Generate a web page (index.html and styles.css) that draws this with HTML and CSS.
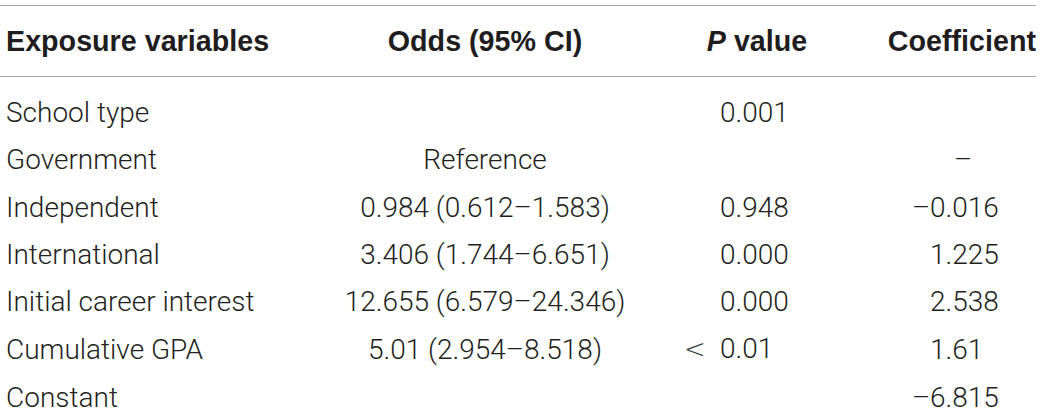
FILE: index.html
```html
<!DOCTYPE html>
<html lang="en">
<head>
<meta charset="utf-8">
<title>Exposure variables</title>
<link rel="stylesheet" href="styles.css">
</head>
<body>
<table class="results">
  <colgroup>
    <col class="c-var">
    <col class="c-odds">
    <col class="c-p">
    <col class="c-coef">
  </colgroup>
  <thead>
    <tr>
      <th class="h-var">Exposure variables</th>
      <th class="h-odds">Odds (95% CI)</th>
      <th class="h-p"><i>P</i> value</th>
      <th class="h-coef">Coefficient</th>
    </tr>
  </thead>
  <tbody>
    <tr class="first">
      <td class="var">School type</td>
      <td class="odds"></td>
      <td class="p">0.001</td>
      <td class="coef"></td>
    </tr>
    <tr>
      <td class="var">Government</td>
      <td class="odds">Reference</td>
      <td class="p"></td>
      <td class="coef"><span class="dash">–</span></td>
    </tr>
    <tr>
      <td class="var">Independent</td>
      <td class="odds">0.984 (0.612–1.583)</td>
      <td class="p">0.948</td>
      <td class="coef"><span class="minus">–</span>0.016</td>
    </tr>
    <tr>
      <td class="var">International</td>
      <td class="odds">3.406 (1.744–6.651)</td>
      <td class="p">0.000</td>
      <td class="coef">1.225</td>
    </tr>
    <tr>
      <td class="var">Initial career interest</td>
      <td class="odds">12.655 (6.579–24.346)</td>
      <td class="p">0.000</td>
      <td class="coef">2.538</td>
    </tr>
    <tr>
      <td class="var">Cumulative GPA</td>
      <td class="odds">5.01 (2.954–8.518)</td>
      <td class="p"><span class="lt">&lt;</span>0.01</td>
      <td class="coef">1.61</td>
    </tr>
    <tr>
      <td class="var">Constant</td>
      <td class="odds"></td>
      <td class="p"></td>
      <td class="coef"><span class="minus">–</span>6.815</td>
    </tr>
  </tbody>
</table>
</body>
</html>
```

FILE: styles.css
```css
html, body {
  margin: 0;
  padding: 0;
  background: #ffffff;
}

body {
  padding-top: 5px;
  font-family: "Liberation Sans", Arial, Helvetica, sans-serif;
  color: #231f20;
}

.results {
  width: 1036px;
  border-collapse: collapse;
  table-layout: fixed;
}

.c-var { width: 340px; }
.c-odds { width: 290px; }
.c-p { width: 254px; }
.c-coef { width: 152px; }

.results thead th {
  height: 70px;
  padding: 0;
  font-family: "Liberation Sans", Arial, Helvetica, sans-serif;
  font-size: 28.7px;
  line-height: 70px;
  font-weight: 700;
  color: #1f1d1e;
  border-top: 1px solid #a8a8a8;
  border-bottom: 1px solid #a8a8a8;
  white-space: nowrap;
  vertical-align: middle;
}

.h-var { text-align: left; padding-left: 6px !important; }
.h-odds { text-align: center; }
.h-p { text-align: center; }
.h-coef { text-align: right; }

.results td {
  padding: 0;
  font-family: Roboto, "Liberation Sans", Arial, sans-serif;
  font-size: 28px;
  line-height: 47.3px;
  font-weight: 300;
  color: #231f20;
  white-space: nowrap;
}

.results tr.first td {
  padding-top: 12px;
}

.var { text-align: left; padding-left: 6px !important; }
.odds { text-align: center; }
.p { text-align: left; padding-left: 90px !important; }
.coef { text-align: left; padding-left: 46px !important; }

.minus {
  display: inline-block;
  margin-left: -18px;
  width: 18px;
}

.dash {
  display: inline-block;
  margin-left: 24px;
}

.lt {
  display: inline-block;
  margin-left: -36px;
  width: 36px;
  font-family: "DejaVu Sans", sans-serif;
  font-weight: 200;
  font-size: 26px;
  color: #333;
}
```
